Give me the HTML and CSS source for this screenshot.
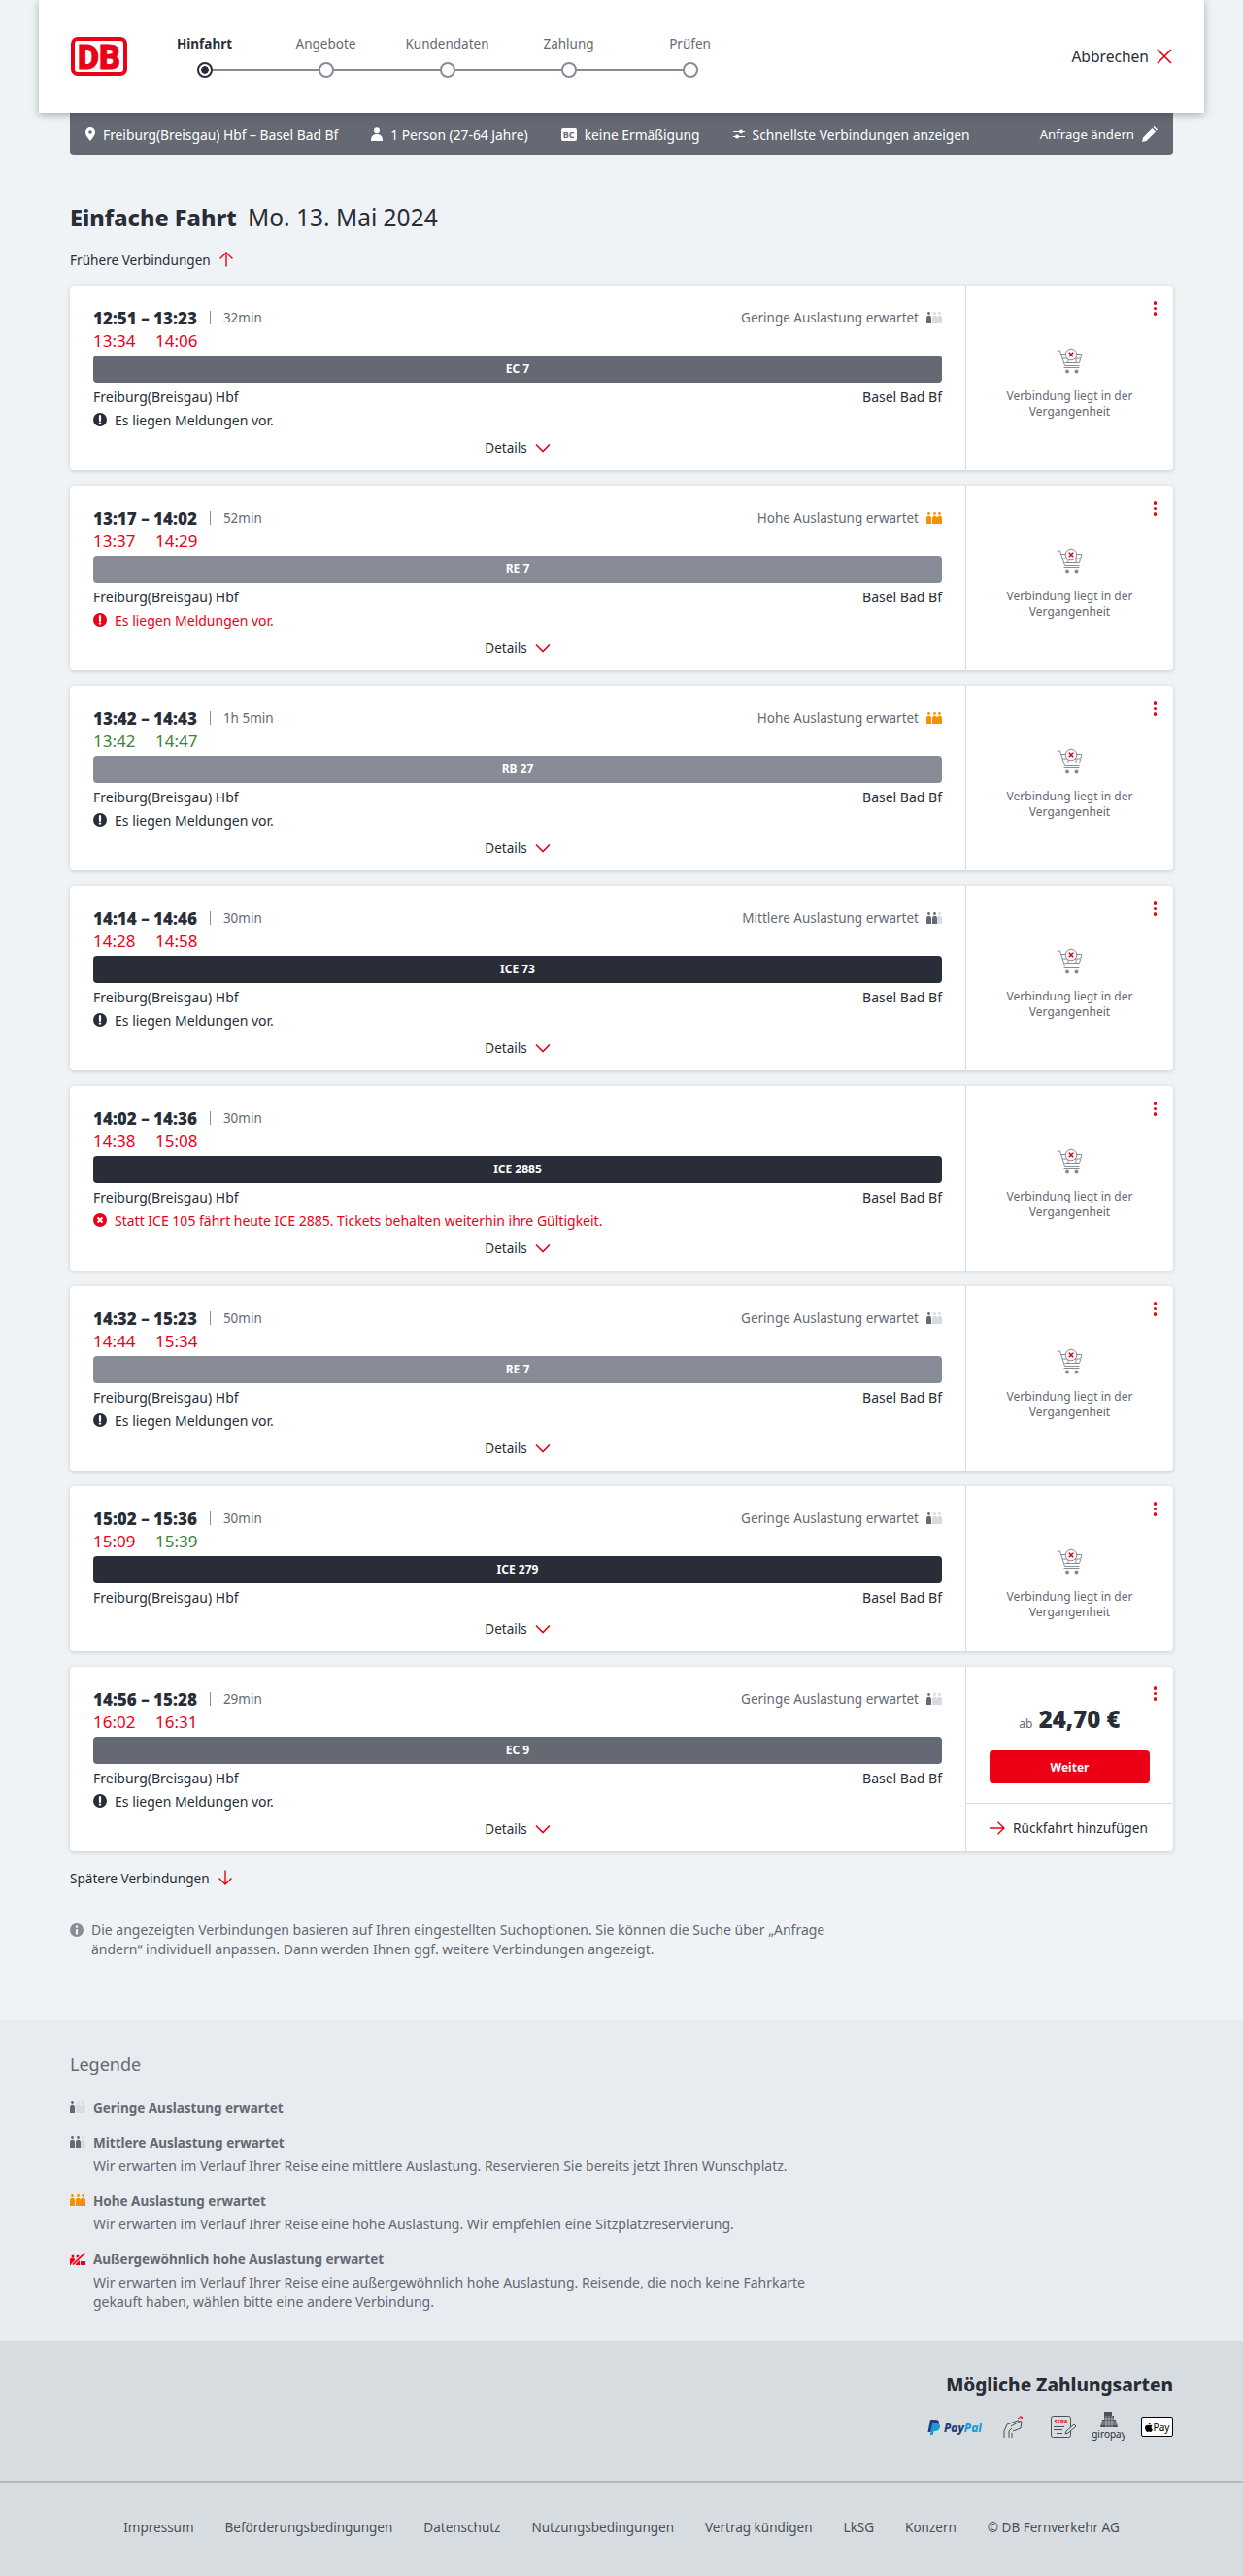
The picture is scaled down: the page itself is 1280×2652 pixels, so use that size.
FILE: index.html
```html
<!DOCTYPE html>
<html lang="de">

<head>
    <meta charset="UTF-8">
    <title>Einfache Fahrt</title>
    <link rel="stylesheet" href="styles.css">
</head>

<body>
    <!-- Icons -->
    <svg class="sprite" aria-hidden="true">
        <symbol id="person" viewBox="0 0 5 12">
            <circle cx="2.5" cy="1.5" r="1.4" />
            <path d="M0 6.2a2.4 2.4 0 0 1 5 0V12H0z" />
        </symbol>
        <symbol id="chevron" viewBox="0 0 16 10">
            <path d="M1 1.5l7 7 7-7" fill="none" stroke="currentColor" stroke-width="1.6" />
        </symbol>
        <symbol id="notice" viewBox="0 0 14 14">
            <circle cx="7" cy="7" r="7" fill="currentColor" />
            <path d="M7 3v5" stroke="#fff" stroke-width="2.2" stroke-linecap="round" />
            <circle cx="7" cy="10.6" r="1.2" fill="#fff" />
        </symbol>
        <symbol id="cancelled" viewBox="0 0 14 14">
            <circle cx="7" cy="7" r="7" fill="currentColor" />
            <path d="M4.5 4.5l5 5M9.500 4.500l-5 5" stroke="#fff" stroke-width="2" />
        </symbol>
        <symbol id="cart" viewBox="0 0 27 27">
            <g fill="none" stroke="#878c96" stroke-width="1">
                <path d="M0.500 3h3l5 15.500h15" />
                <path d="M4.500 6.500h5M17 6.500h9l-2.500 9h-15" />
                <path d="M6 11h18M12 6.500v9M20 11v4.500M7.500 20.500h16" />
                <circle cx="15" cy="7" r="5.800" fill="#fff" />
            </g>
            <circle cx="11" cy="24.500" r="2" fill="#878c96" />
            <circle cx="20.500" cy="24.500" r="2" fill="#878c96" />
            <path d="M12.800 4.800l4.400 4.400M17.200 4.800l-4.400 4.400" stroke="#ec0016" stroke-width="1.600" />
        </symbol>
    </svg>

    <header class="topbar">
        <div class="logo"><svg viewBox="0 0 58 40" width="58" height="40">
                <rect x="2" y="2" width="54" height="36" rx="5" fill="#fff" stroke="#ec0016" stroke-width="4" />
                <text x="29" y="32.500" text-anchor="middle" textLength="44" lengthAdjust="spacingAndGlyphs" class="logo-text">DB</text>
            </svg></div>
        <ol class="stepper">
            <li class="step active"><span class="step-label">Hinfahrt</span><span class="step-dot"></span></li>
            <li class="step"><span class="step-label">Angebote</span><span class="step-dot"></span></li>
            <li class="step"><span class="step-label">Kundendaten</span><span class="step-dot"></span></li>
            <li class="step"><span class="step-label">Zahlung</span><span class="step-dot"></span></li>
            <li class="step"><span class="step-label">Prüfen</span><span class="step-dot"></span></li>
        </ol>
        <a class="cancel">Abbrechen
            <svg viewBox="0 0 16 16" width="16" height="16"><path d="M1 1l14 14M15 1L1 15" stroke="#ec0016" stroke-width="1.700" /></svg>
        </a>
    </header>

    <div class="summary">
        <span class="summary-item">
            <svg viewBox="0 0 10 14" width="10" height="14"><path fill="#fff" fill-rule="evenodd" d="M5 0a5 5 0 0 1 5 5c0 3.500-5 9-5 9S0 8.500 0 5a5 5 0 0 1 5-5zm0 3.200a1.800 1.800 0 1 0 0 3.600 1.800 1.800 0 0 0 0-3.600z" /></svg>
            Freiburg(Breisgau) Hbf – Basel Bad Bf
        </span>
        <span class="summary-item">
            <svg viewBox="0 0 12 14" width="12" height="14"><circle cx="6" cy="3.200" r="3" fill="#fff" /><path fill="#fff" d="M0 14c0-5 2-7 6-7s6 2 6 7z" /></svg>
            1 Person (27-64 Jahre)
        </span>
        <span class="summary-item">
            <span class="bc-icon">BC</span>
            keine Ermäßigung
        </span>
        <span class="summary-item">
            <svg viewBox="0 0 12 10" width="12" height="10"><g stroke="#fff" stroke-width="1.200"><path d="M0 2.500h12M0 7.500h12" /></g><circle cx="8" cy="2.500" r="2" fill="#fff" /><circle cx="4" cy="7.500" r="2" fill="#fff" /></svg>
            Schnellste Verbindungen anzeigen
        </span>
        <span class="summary-item summary-edit">
            Anfrage ändern
            <svg viewBox="0 0 16 16" width="16" height="16"><path fill="#fff" d="M0 16l1-4.500L10.500 2 14 5.500 4.500 15zM11.500 1l1-1L16 3.500l-1 1z" /></svg>
        </span>
    </div>

    <main class="content">
        <h1 class="title"><b>Einfache Fahrt</b> <span>Mo. 13. Mai 2024</span></h1>

        <a class="more-link">Frühere Verbindungen
            <svg viewBox="0 0 16 16" width="16" height="16"><path d="M8 15.500V1M1.500 7.500L8 1l6.500 6.500" fill="none" stroke="#ec0016" stroke-width="1.400" /></svg>
        </a>

        <div class="card-list">
            <article class="card">
                <div class="card-main">
                    <div class="row-time">
                        <span class="time">12:51 – 13:23</span><span class="duration">32min</span>
                        <span class="load">Geringe Auslastung erwartet <span class="people low"><svg><use href="#person" /></svg><svg><use href="#person" /></svg><svg><use href="#person" /></svg></span></span>
                    </div>
                    <div class="row-delay"><span class="late">13:34</span><span class="late">14:06</span></div>
                    <div class="train train-ec">EC 7</div>
                    <div class="row-stations"><span>Freiburg(Breisgau) Hbf</span><span>Basel Bad Bf</span></div>
                    <div class="message"><svg><use href="#notice" /></svg>Es liegen Meldungen vor.</div>
                    <a class="details">Details <svg><use href="#chevron" /></svg></a>
                </div>
                <aside class="card-side">
                    <span class="more-dots"><i></i><i></i><i></i></span>
                    <svg class="cart"><use href="#cart" /></svg>
                    <p class="past">Verbindung liegt in der Vergangenheit</p>
                </aside>
            </article>

            <article class="card">
                <div class="card-main">
                    <div class="row-time">
                        <span class="time">13:17 – 14:02</span><span class="duration">52min</span>
                        <span class="load">Hohe Auslastung erwartet <span class="people high"><svg><use href="#person" /></svg><svg><use href="#person" /></svg><svg><use href="#person" /></svg></span></span>
                    </div>
                    <div class="row-delay"><span class="late">13:37</span><span class="late">14:29</span></div>
                    <div class="train train-re">RE 7</div>
                    <div class="row-stations"><span>Freiburg(Breisgau) Hbf</span><span>Basel Bad Bf</span></div>
                    <div class="message message-red"><svg><use href="#notice" /></svg>Es liegen Meldungen vor.</div>
                    <a class="details">Details <svg><use href="#chevron" /></svg></a>
                </div>
                <aside class="card-side">
                    <span class="more-dots"><i></i><i></i><i></i></span>
                    <svg class="cart"><use href="#cart" /></svg>
                    <p class="past">Verbindung liegt in der Vergangenheit</p>
                </aside>
            </article>

            <article class="card">
                <div class="card-main">
                    <div class="row-time">
                        <span class="time">13:42 – 14:43</span><span class="duration">1h 5min</span>
                        <span class="load">Hohe Auslastung erwartet <span class="people high"><svg><use href="#person" /></svg><svg><use href="#person" /></svg><svg><use href="#person" /></svg></span></span>
                    </div>
                    <div class="row-delay"><span class="ontime">13:42</span><span class="ontime">14:47</span></div>
                    <div class="train train-re">RB 27</div>
                    <div class="row-stations"><span>Freiburg(Breisgau) Hbf</span><span>Basel Bad Bf</span></div>
                    <div class="message"><svg><use href="#notice" /></svg>Es liegen Meldungen vor.</div>
                    <a class="details">Details <svg><use href="#chevron" /></svg></a>
                </div>
                <aside class="card-side">
                    <span class="more-dots"><i></i><i></i><i></i></span>
                    <svg class="cart"><use href="#cart" /></svg>
                    <p class="past">Verbindung liegt in der Vergangenheit</p>
                </aside>
            </article>

            <article class="card">
                <div class="card-main">
                    <div class="row-time">
                        <span class="time">14:14 – 14:46</span><span class="duration">30min</span>
                        <span class="load">Mittlere Auslastung erwartet <span class="people mid"><svg><use href="#person" /></svg><svg><use href="#person" /></svg><svg><use href="#person" /></svg></span></span>
                    </div>
                    <div class="row-delay"><span class="late">14:28</span><span class="late">14:58</span></div>
                    <div class="train train-ice">ICE 73</div>
                    <div class="row-stations"><span>Freiburg(Breisgau) Hbf</span><span>Basel Bad Bf</span></div>
                    <div class="message"><svg><use href="#notice" /></svg>Es liegen Meldungen vor.</div>
                    <a class="details">Details <svg><use href="#chevron" /></svg></a>
                </div>
                <aside class="card-side">
                    <span class="more-dots"><i></i><i></i><i></i></span>
                    <svg class="cart"><use href="#cart" /></svg>
                    <p class="past">Verbindung liegt in der Vergangenheit</p>
                </aside>
            </article>

            <article class="card">
                <div class="card-main">
                    <div class="row-time">
                        <span class="time">14:02 – 14:36</span><span class="duration">30min</span>
                    </div>
                    <div class="row-delay"><span class="late">14:38</span><span class="late">15:08</span></div>
                    <div class="train train-ice">ICE 2885</div>
                    <div class="row-stations"><span>Freiburg(Breisgau) Hbf</span><span>Basel Bad Bf</span></div>
                    <div class="message message-red"><svg><use href="#cancelled" /></svg>Statt ICE 105 fährt heute ICE 2885. Tickets behalten weiterhin ihre Gültigkeit.</div>
                    <a class="details">Details <svg><use href="#chevron" /></svg></a>
                </div>
                <aside class="card-side">
                    <span class="more-dots"><i></i><i></i><i></i></span>
                    <svg class="cart"><use href="#cart" /></svg>
                    <p class="past">Verbindung liegt in der Vergangenheit</p>
                </aside>
            </article>

            <article class="card">
                <div class="card-main">
                    <div class="row-time">
                        <span class="time">14:32 – 15:23</span><span class="duration">50min</span>
                        <span class="load">Geringe Auslastung erwartet <span class="people low"><svg><use href="#person" /></svg><svg><use href="#person" /></svg><svg><use href="#person" /></svg></span></span>
                    </div>
                    <div class="row-delay"><span class="late">14:44</span><span class="late">15:34</span></div>
                    <div class="train train-re">RE 7</div>
                    <div class="row-stations"><span>Freiburg(Breisgau) Hbf</span><span>Basel Bad Bf</span></div>
                    <div class="message"><svg><use href="#notice" /></svg>Es liegen Meldungen vor.</div>
                    <a class="details">Details <svg><use href="#chevron" /></svg></a>
                </div>
                <aside class="card-side">
                    <span class="more-dots"><i></i><i></i><i></i></span>
                    <svg class="cart"><use href="#cart" /></svg>
                    <p class="past">Verbindung liegt in der Vergangenheit</p>
                </aside>
            </article>

            <article class="card card-short">
                <div class="card-main">
                    <div class="row-time">
                        <span class="time">15:02 – 15:36</span><span class="duration">30min</span>
                        <span class="load">Geringe Auslastung erwartet <span class="people low"><svg><use href="#person" /></svg><svg><use href="#person" /></svg><svg><use href="#person" /></svg></span></span>
                    </div>
                    <div class="row-delay"><span class="late">15:09</span><span class="ontime">15:39</span></div>
                    <div class="train train-ice">ICE 279</div>
                    <div class="row-stations"><span>Freiburg(Breisgau) Hbf</span><span>Basel Bad Bf</span></div>
                    <a class="details">Details <svg><use href="#chevron" /></svg></a>
                </div>
                <aside class="card-side">
                    <span class="more-dots"><i></i><i></i><i></i></span>
                    <svg class="cart"><use href="#cart" /></svg>
                    <p class="past">Verbindung liegt in der Vergangenheit</p>
                </aside>
            </article>

            <article class="card">
                <div class="card-main">
                    <div class="row-time">
                        <span class="time">14:56 – 15:28</span><span class="duration">29min</span>
                        <span class="load">Geringe Auslastung erwartet <span class="people low"><svg><use href="#person" /></svg><svg><use href="#person" /></svg><svg><use href="#person" /></svg></span></span>
                    </div>
                    <div class="row-delay"><span class="late">16:02</span><span class="late">16:31</span></div>
                    <div class="train train-ec">EC 9</div>
                    <div class="row-stations"><span>Freiburg(Breisgau) Hbf</span><span>Basel Bad Bf</span></div>
                    <div class="message"><svg><use href="#notice" /></svg>Es liegen Meldungen vor.</div>
                    <a class="details">Details <svg><use href="#chevron" /></svg></a>
                </div>
                <aside class="card-side card-offer">
                    <span class="more-dots more-dots-low"><i></i><i></i><i></i></span>
                    <div class="offer">
                        <p class="price"><small>ab</small> 24,70 €</p>
                        <button class="btn-next" type="button">Weiter</button>
                    </div>
                    <a class="return-link">
                        <svg viewBox="0 0 16 14" width="16" height="14"><path d="M0 7h15M8.500 0.700L15 7l-6.500 6.300" fill="none" stroke="#ec0016" stroke-width="1.400" /></svg>
                        Rückfahrt hinzufügen
                    </a>
                </aside>
            </article>
        </div>

        <a class="more-link more-link-later">Spätere Verbindungen
            <svg viewBox="0 0 16 16" width="16" height="16"><path d="M8 .5V15M1.500 8.500L8 15l6.500-6.500" fill="none" stroke="#ec0016" stroke-width="1.400" /></svg>
        </a>

        <div class="hint">
            <svg viewBox="0 0 14 14" width="14" height="14"><circle cx="7" cy="7" r="7" fill="#878c96" /><circle cx="7" cy="3.600" r="1.300" fill="#eff3f6" /><path d="M7 6v5.500" stroke="#eff3f6" stroke-width="2.200" /></svg>
            <p>Die angezeigten Verbindungen basieren auf Ihren eingestellten Suchoptionen. Sie können die Suche über „Anfrage ändern“ individuell anpassen. Dann werden Ihnen ggf. weitere Verbindungen angezeigt.</p>
        </div>
    </main>

    <section class="legend">
        <h2>Legende</h2>
        <div class="legend-item">
            <span class="people low"><svg><use href="#person" /></svg><svg><use href="#person" /></svg><svg><use href="#person" /></svg></span>
            <div>
                <h3>Geringe Auslastung erwartet</h3>
            </div>
        </div>
        <div class="legend-item">
            <span class="people mid"><svg><use href="#person" /></svg><svg><use href="#person" /></svg><svg><use href="#person" /></svg></span>
            <div>
                <h3>Mittlere Auslastung erwartet</h3>
                <p>Wir erwarten im Verlauf Ihrer Reise eine mittlere Auslastung. Reservieren Sie bereits jetzt Ihren Wunschplatz.</p>
            </div>
        </div>
        <div class="legend-item">
            <span class="people high"><svg><use href="#person" /></svg><svg><use href="#person" /></svg><svg><use href="#person" /></svg></span>
            <div>
                <h3>Hohe Auslastung erwartet</h3>
                <p>Wir erwarten im Verlauf Ihrer Reise eine hohe Auslastung. Wir empfehlen eine Sitzplatzreservierung.</p>
            </div>
        </div>
        <div class="legend-item">
            <svg class="people-full" viewBox="0 0 16 13" width="16" height="13">
                <circle cx="3" cy="4" r="1.500" fill="#ec0016" />
                <circle cx="8" cy="4" r="1.500" fill="#ec0016" />
                <path fill="#ec0016" d="M0 8a2.500 2.500 0 0 1 5 0v5H0zM6 8a2 2 0 0 1 4 0v5H6zM11 9h5v4h-5z" />
                <path d="M2 13.500L15 1" stroke="#e8ebf0" stroke-width="3.200" />
                <path d="M3 12.500L15.500 .5" stroke="#ec0016" stroke-width="1.600" />
            </svg>
            <div>
                <h3>Außergewöhnlich hohe Auslastung erwartet</h3>
                <p>Wir erwarten im Verlauf Ihrer Reise eine außergewöhnlich hohe Auslastung. Reisende, die noch keine Fahrkarte gekauft haben, wählen bitte eine andere Verbindung.</p>
            </div>
        </div>
    </section>

    <section class="payment">
        <h2>Mögliche Zahlungsarten</h2>
        <div class="payment-icons">
            <svg class="pay-paypal" viewBox="0 0 56 16" width="56" height="16">
                <path fill="#253b80" d="M3 0h5c3 0 4.500 1.500 4 4-.5 3-2.500 4.500-5.500 4.500H4.500L3.500 13H0.500z" />
                <path fill="#179bd7" d="M5 4h4.500c2.500 0 4 1.300 3.500 3.800-.5 2.700-2.500 4.200-5 4.200H6.500l-.8 4H2.800z" />
                <text x="17" y="12.500" textLength="39" lengthAdjust="spacingAndGlyphs" class="pp-text"><tspan fill="#253b80">Pay</tspan><tspan fill="#179bd7">Pal</tspan></text>
            </svg>
            <svg class="pay-card" viewBox="0 0 23 24" width="23" height="24">
                <g fill="none" stroke="#4a4f58" stroke-width="1">
                    <path d="M1 23v-7l3-7 11-4 4 1-1 7-8 3" />
                    <path d="M6 23v-7l3-3M9 23v-5" />
                    <path d="M8 11l9-5" />
                </g>
                <path d="M15 3c1-1.500 4-1.500 5 0M17 1c.5-.5 2-.5 3 1" fill="none" stroke="#ec0016" stroke-width="1" />
            </svg>
            <svg class="pay-sepa" viewBox="0 0 26 23" width="26" height="23">
                <rect x="0.500" y="0.500" width="20" height="22" rx="2" fill="none" stroke="#4a4f58" />
                <text x="10.500" y="8" text-anchor="middle" class="sepa-text">SEPA</text>
                <path d="M3 11.500h11M3 14.500h9M6 18.500h6" stroke="#4a4f58" stroke-width="1" />
                <path d="M15 19l1-3 8-7 2 2-8 7z" fill="#d7dce1" stroke="#4a4f58" stroke-width="1" />
            </svg>
            <svg viewBox="0 0 34 31" width="34" height="31">
                <path d="M12 0h8v4h2v4h2l2 8H8l2-8h2V4z" fill="#4a4f58" />
                <path d="M10 7h14M9 10h16M9 13h16M14 4v12M17 4v12M20 4v12" stroke="#d7dce1" stroke-width=".6" />
                <text x="17" y="27" text-anchor="middle" class="giro-text">giropay</text>
            </svg>
            <span class="apple-pay"><svg viewBox="0 0 8 10" width="8" height="10"><path d="M5.400 1.700C5.900 1.100 6 .5 6 0c-.6 0-1.200.4-1.600.8-.4.500-.6 1-.5 1.500.6 0 1.100-.2 1.500-.6zM6.600 5.200c0-.9.700-1.400 1.100-1.600-.5-.7-1.300-.9-1.700-.9-.7 0-1.300.4-1.700.4s-1-.4-1.600-.4C1.500 2.700 0 3.600 0 5.600 0 7.500 1.400 10 2.600 10c.5 0 .9-.4 1.600-.4s1 .4 1.600.4c1 0 1.900-1.800 2.200-2.700-1-.4-1.400-1.300-1.400-2.100z" fill="#000" /></svg>Pay</span>
        </div>
    </section>

    <footer class="footer">
        <a>Impressum</a>
        <a>Beförderungsbedingungen</a>
        <a>Datenschutz</a>
        <a>Nutzungsbedingungen</a>
        <a>Vertrag kündigen</a>
        <a>LkSG</a>
        <a>Konzern</a>
        <a>© DB Fernverkehr AG</a>
    </footer>
</body>

</html>
```

FILE: styles.css
```css
/* General Styles */
body {
    margin: 0;
    font-family: "Noto Sans", sans-serif;
    font-size: 14px;
    color: #282d37;
    background-color: #eff3f6;
}

.sprite {
    display: none;
}

h1,
h2,
h3,
p,
ol {
    margin: 0;
    padding: 0;
}

/* Header */
.topbar {
    position: relative;
    z-index: 2;
    display: flex;
    align-items: center;
    height: 116px;
    margin: 0 40px;
    padding: 0 33px;
    background: #fff;
    box-shadow: 0 2px 8px rgba(40, 45, 55, 0.35);
}

.logo {
    display: flex;
    margin-right: 17px;
}

.logo-text {
    font-family: "Roboto", sans-serif;
    font-size: 35px;
    font-weight: 900;
    fill: #ec0016;
    stroke: #ec0016;
    stroke-width: 0.8px;
}

.stepper {
    display: flex;
    list-style: none;
}

.step {
    position: relative;
    display: flex;
    flex-direction: column;
    align-items: center;
    gap: 10px;
    width: 125px;
    font-size: 13.500px;
    color: #646973;
}

.step-label {
    line-height: 18px;
}

.step-dot {
    position: relative;
    z-index: 1;
    box-sizing: border-box;
    width: 16px;
    height: 16px;
    background: #fff;
    border: 2px solid #878c96;
    border-radius: 50%;
}

.step:not(:last-child)::after {
    content: "";
    position: absolute;
    left: 50%;
    bottom: 7px;
    width: 125px;
    height: 2px;
    background: #878c96;
}

.active {
    font-weight: 700;
    color: #282d37;
}

.active .step-dot {
    border-color: #282d37;
    background: radial-gradient(circle, #282d37 0 3.500px, #fff 4px);
}

.cancel {
    display: flex;
    align-items: center;
    gap: 8px;
    margin-left: auto;
    font-size: 15.600px;
}

/* Summary bar */
.summary {
    position: relative;
    z-index: 1;
    display: flex;
    align-items: center;
    gap: 34px;
    height: 44px;
    margin: 0 72px;
    padding: 0 16px 0 16px;
    color: #fff;
    font-size: 13.800px;
    background: #646973;
    border-radius: 0 0 4px 4px;
}

.summary-item {
    display: flex;
    align-items: center;
    gap: 8px;
}

.summary-edit {
    margin-left: auto;
    font-size: 13.200px;
}

.bc-icon {
    width: 16px;
    height: 13px;
    font-size: 9px;
    font-weight: 700;
    line-height: 13px;
    text-align: center;
    color: #646973;
    background: #fff;
    border-radius: 2px;
}

/* Content */
.content {
    padding: 48px 72px 63px;
}

.title {
    font-size: 24.500px;
    font-weight: 400;
    line-height: 32px;
}

.title b {
    font-size: 23.500px;
    font-weight: 800;
    margin-right: 5px;
}

.more-link {
    display: flex;
    align-items: center;
    gap: 8px;
    height: 24px;
    margin: 15px 0;
    font-size: 13.600px;
}

.more-link-later {
    margin-bottom: 32px;
}

.card-list {
    display: flex;
    flex-direction: column;
    gap: 16px;
}

/* Card Styles */
.card {
    display: flex;
    height: 190px;
    background: #fff;
    border-radius: 4px;
    box-shadow: 0 1px 4px rgba(40, 45, 55, 0.2);
}

.card-short {
    height: 170px;
}

.card-main {
    flex: 1;
    display: flex;
    flex-direction: column;
    padding: 21px 24px 0;
}

.row-time {
    display: flex;
    align-items: center;
    height: 24px;
}

.time {
    font-size: 17px;
    font-weight: 900;
}

.duration {
    margin-left: 13px;
    padding-left: 13px;
    font-size: 13.500px;
    line-height: 14px;
    color: #646973;
    border-left: 1px solid #878c96;
}

.load {
    display: flex;
    align-items: center;
    gap: 8px;
    margin-left: auto;
    font-size: 13.500px;
    color: #646973;
}

.people {
    display: flex;
    gap: 0.500px;
    width: 16px;
    flex-shrink: 0;
}

.people svg {
    width: 5px;
    height: 12px;
    fill: #d7dce1;
}

.low svg:first-child,
.mid svg:nth-child(-n+2) {
    fill: #646973;
}

.high svg {
    fill: #f39200;
}

.row-delay {
    display: flex;
    align-items: center;
    height: 22px;
    font-size: 17px;
}

.row-delay span {
    width: 64px;
}

.late {
    color: #ec0016;
}

.ontime {
    color: #408335;
}

.train {
    height: 28px;
    margin-top: 5px;
    font-size: 12px;
    font-weight: 700;
    line-height: 28px;
    text-align: center;
    color: #fff;
    border-radius: 4px;
}

.train-ec {
    background: #646973;
}

.train-re {
    background: #878c96;
}

.train-ice {
    background: #282d37;
}

.row-stations {
    display: flex;
    justify-content: space-between;
    align-items: center;
    height: 24px;
    margin-top: 2px;
    font-size: 14px;
}

.message {
    display: flex;
    align-items: center;
    gap: 8px;
    height: 24px;
    font-size: 14px;
}

.message svg {
    width: 14px;
    height: 14px;
}

.message-red {
    color: #ec0016;
}

.details {
    display: flex;
    justify-content: center;
    align-items: center;
    gap: 8px;
    height: 24px;
    margin-top: 5px;
    font-size: 13.500px;
}

.details svg {
    width: 16px;
    height: 10px;
    color: #ec0016;
}

.card-short .details {
    margin-top: 9px;
}

.card-side {
    position: relative;
    box-sizing: border-box;
    display: flex;
    flex-direction: column;
    align-items: center;
    width: 214px;
    padding: 64px 12px 0;
    border-left: 1px solid #d7dce1;
}

.more-dots {
    position: absolute;
    top: 16px;
    right: 17px;
    display: flex;
    flex-direction: column;
    gap: 2px;
}

.more-dots-low {
    top: 20px;
}

.more-dots i {
    width: 3.500px;
    height: 3.500px;
    background: #ec0016;
    border-radius: 50%;
}

.cart {
    width: 27px;
    height: 27px;
}

.past {
    margin-top: 15px;
    font-size: 12px;
    line-height: 16px;
    text-align: center;
    color: #646973;
}

.card-offer {
    padding: 0;
}

.offer {
    box-sizing: border-box;
    flex: 1;
    align-self: stretch;
    padding: 38px 24px 0;
    text-align: center;
    border-bottom: 1px solid #d7dce1;
}

.price {
    font-size: 24px;
    font-weight: 900;
    line-height: 32px;
}

.price small {
    font-size: 12px;
    font-weight: 400;
    color: #646973;
}

.btn-next {
    width: 100%;
    height: 34px;
    margin-top: 11px;
    font-family: inherit;
    font-size: 12px;
    font-weight: 700;
    color: #fff;
    background: #ec0016;
    border: none;
    border-radius: 4px;
}

.return-link {
    display: flex;
    align-items: center;
    gap: 8px;
    align-self: stretch;
    height: 49px;
    padding-left: 24px;
    font-size: 13.700px;
}

.hint {
    display: flex;
    gap: 8px;
    font-size: 14px;
    line-height: 20px;
    color: #646973;
}

.hint svg {
    flex-shrink: 0;
    margin-top: 3px;
}

.hint p {
    width: 770px;
}

/* Legend */
.legend {
    padding: 33px 72px 28px;
    color: #646973;
    background: #e8ebf0;
}

.legend h2 {
    margin-bottom: 21px;
    font-size: 18px;
    font-weight: 400;
    line-height: 24px;
}

.legend-item {
    display: flex;
    gap: 8px;
    margin-bottom: 12px;
}

.legend-item:last-child {
    margin-bottom: 0;
}

.legend-item .people,
.people-full {
    margin-top: 5px;
}

.legend-item h3 {
    font-size: 13.500px;
    font-weight: 700;
    line-height: 24px;
}

.legend-item p {
    width: 760px;
    margin: 2px 0;
    font-size: 14px;
    line-height: 20px;
}

/* Payment */
.payment {
    box-sizing: border-box;
    height: 146px;
    padding: 31px 72px 0;
    text-align: right;
    background: #d7dce1;
    border-bottom: 2px solid #b4b9bf;
}

.payment h2 {
    font-size: 19px;
    font-weight: 800;
    line-height: 28px;
}

.payment-icons {
    display: flex;
    justify-content: flex-end;
    align-items: center;
    gap: 16px;
    margin-top: 14px;
}

.pay-paypal {
    margin-right: 6px;
}

.pay-card {
    margin-right: 10px;
}

.pay-sepa {
    margin-right: 1px;
}

.pp-text {
    font-family: "Noto Sans", sans-serif;
    font-size: 12px;
    font-style: italic;
    font-weight: 800;
}

.sepa-text {
    font-family: "Noto Sans", sans-serif;
    font-size: 6px;
    font-weight: 700;
    fill: #ec0016;
}

.giro-text {
    font-family: "Noto Sans", sans-serif;
    font-size: 10px;
    fill: #282d37;
}

.apple-pay {
    box-sizing: border-box;
    display: flex;
    align-items: center;
    justify-content: center;
    gap: 1px;
    width: 33px;
    height: 21px;
    font-size: 10px;
    color: #000;
    background: #fff;
    border: 1px solid #000;
    border-radius: 2px;
}

/* Footer */
.footer {
    display: flex;
    justify-content: center;
    align-items: center;
    gap: 32px;
    height: 96px;
    padding-bottom: 4px;
    box-sizing: border-box;
    font-size: 13.500px;
    color: #4a4f58;
    background: #d7dce1;
}
```
